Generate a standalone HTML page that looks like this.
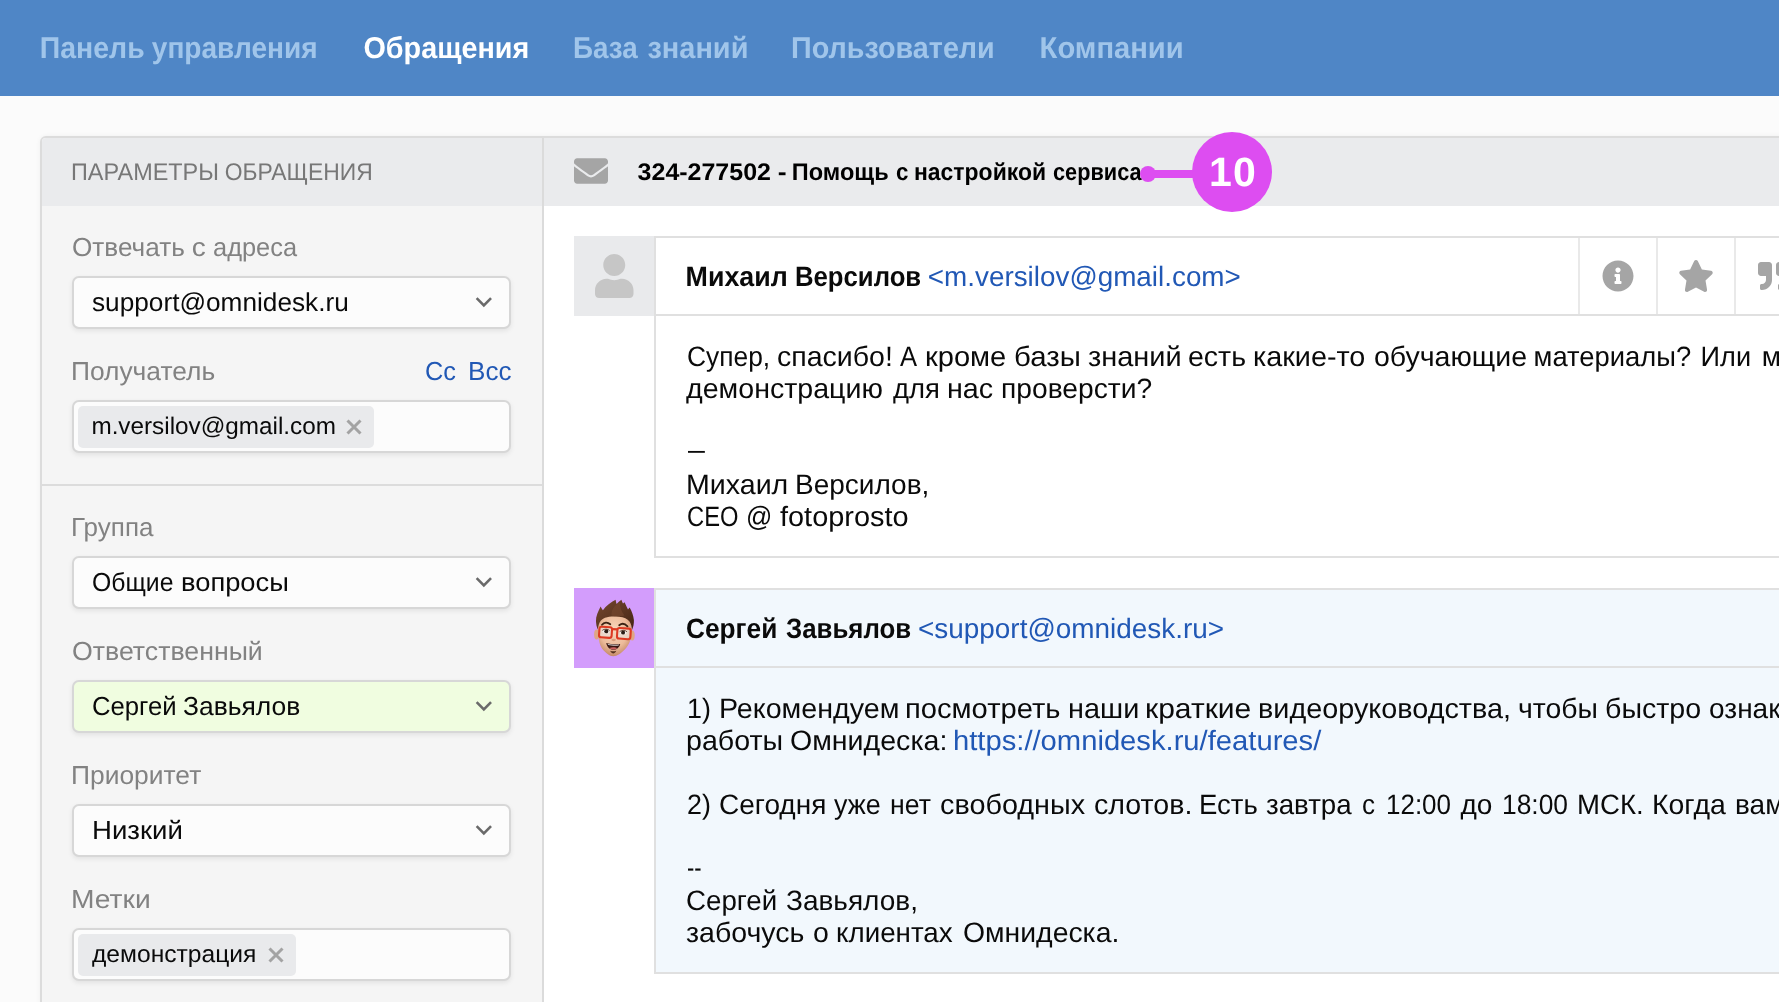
<!DOCTYPE html>
<html lang="ru">
<head>
<meta charset="utf-8">
<title>Обращение 324-277502</title>
<style>
*{box-sizing:border-box;margin:0;padding:0}
html,body{width:1779px;height:1002px;overflow:hidden}
html{background:#fbfbfb}
body{will-change:transform;text-rendering:geometricPrecision}
body{background:#fbfbfb;font-family:"Liberation Sans",sans-serif;color:#0a0a0a;position:relative;font-size:26px;line-height:32px}
.abs{position:absolute;white-space:nowrap;transform-origin:0 50%}
/* NAV */
.nav{position:absolute;left:0;top:0;width:1779px;height:96px;background:#4f86c6}
.nav a{position:absolute;transform-origin:0 50%;top:33px;font-weight:bold;font-size:30px;line-height:32px;color:#a0c5ea;white-space:nowrap;text-decoration:none}
.nav a.on{color:#fff}
/* PANEL */
.panel{position:absolute;left:40px;top:136px;width:1800px;height:900px;border:2px solid #dcdcdc;border-radius:6px 0 0 0;background:#fff;box-shadow:0 0 5px rgba(0,0,0,.05)}
.side{position:absolute;left:42px;top:138px;width:500px;height:900px;background:#f5f5f5;border-radius:4px 0 0 0}
.sidehead{position:absolute;left:42px;top:138px;width:500px;height:68px;background:#eaebed;border-radius:4px 0 0 0}
.vline{position:absolute;left:542px;top:138px;width:2px;height:900px;background:#dbdbdb}
.mainhead{position:absolute;left:544px;top:138px;width:1300px;height:68px;background:#eaebed}
.hline{position:absolute;left:42px;top:484px;width:500px;height:2px;background:#dcdcdc}
.h1{font-size:24px;color:#777;top:157px;left:72px}
.lbl{color:#828282;left:72px}
.lnk{color:#2158b5}
.sel{position:absolute;left:72px;width:439px;height:53px;border:2px solid #d7d7d7;border-radius:7px;background:#fcfcfc;box-shadow:0 2px 5px rgba(0,0,0,.08)}
.sel.g{background:#f0fde0}
.sel>span{position:absolute;left:19px;top:8px;white-space:nowrap;transform-origin:0 50%}
.sel svg{position:absolute;left:400px;top:18px}
.tag{position:absolute;left:4px;top:4px;height:42px;background:#e9eaec;border-radius:5px}
.sel .tag>span{left:14px;top:5px;font-size:24px}
.tag svg{position:absolute;top:13px}
/* MESSAGES */
.ava{position:absolute;left:574px;width:80px;height:80px}
.msg{position:absolute;left:654px;width:1200px;border:2px solid #e0e0e0;background:#fff}
.msg .hd{position:absolute;left:0;top:0;width:1200px;height:78px;border-bottom:2px solid #e0e0e0}
.msg{font-size:28px}
.msg .hd .abs{top:23px}
.ln{position:absolute;left:30px;white-space:nowrap;transform-origin:0 50%}
.w{display:inline-block;transform-origin:0 50%}
/*FIT-START*/
#a1_0{transform:translateX(1.00px) scaleX(0.9414)}
#a1_1{transform:translateX(-5.00px) scaleX(1.0183)}
#a1_10{transform:translateX(5.60px) scaleX(0.9690)}
#a1_11{transform:translateX(7.00px) scaleX(1.0000)}
#a1_2{transform:translateX(-4.00px) scaleX(0.9140)}
#a1_3{transform:translateX(-5.00px) scaleX(1.0393)}
#a1_4{transform:translateX(-2.00px) scaleX(1.0495)}
#a1_5{transform:translateX(0.00px) scaleX(1.0338)}
#a1_6{transform:translateX(2.00px) scaleX(1.0185)}
#a1_7{transform:translateX(2.00px) scaleX(1.0280)}
#a1_8{transform:translateX(6.00px) scaleX(1.0175)}
#a1_9{transform:translateX(7.60px) scaleX(0.9776)}
#a2_0{transform:translateX(0.00px) scaleX(1.0209)}
#a2_1{transform:translateX(6.00px) scaleX(0.9797)}
#a2_2{transform:translateX(5.00px) scaleX(1.0244)}
#a2_3{transform:translateX(6.00px) scaleX(1.0069)}
#a4{transform:translateX(2.00px) scaleX(0.6022)}
#a5_0{transform:translateX(0.00px) scaleX(1.0207)}
#a5_1{transform:translateX(1.00px) scaleX(1.0000)}
#a6_0{transform:translateX(1.00px) scaleX(0.8480)}
#a6_1{transform:translateX(-8.00px) scaleX(0.9246)}
#a6_2{transform:translateX(-11.00px) scaleX(1.0321)}
#b1_0{transform:translateX(1.00px) scaleX(0.9589)}
#b1_1{transform:translateX(0.00px) scaleX(1.0231)}
#b1_2{transform:translateX(2.00px) scaleX(1.0406)}
#b1_3{transform:translateX(8.00px) scaleX(1.0307)}
#b1_4{transform:translateX(8.00px) scaleX(1.0726)}
#b1_5{transform:translateX(14.00px) scaleX(1.0288)}
#b1_6{transform:translateX(20.00px) scaleX(1.0132)}
#b1_7{transform:translateX(21.00px) scaleX(1.0218)}
#b1_8{transform:translateX(23.00px) scaleX(1.0000)}
#b2_0{transform:translateX(0.00px) scaleX(1.0218)}
#b2_1{transform:translateX(1.00px) scaleX(1.0199)}
#b2l{transform:translateX(-1.00px) scaleX(1.0425)}
#b4_0{transform:translateX(1.00px) scaleX(0.9594)}
#b4_1{transform:translateX(0.00px) scaleX(1.0001)}
#b4_10{transform:translateX(5.00px) scaleX(1.0000)}
#b4_11{transform:translateX(7.00px) scaleX(0.9414)}
#b4_12{transform:translateX(4.00px) scaleX(0.9847)}
#b4_13{transform:translateX(3.00px) scaleX(1.0148)}
#b4_14{transform:translateX(6.00px) scaleX(1.0000)}
#b4_2{transform:translateX(0.00px) scaleX(0.9597)}
#b4_3{transform:translateX(0.00px) scaleX(0.9524)}
#b4_4{transform:translateX(-1.00px) scaleX(1.0286)}
#b4_5{transform:translateX(4.00px) scaleX(1.0215)}
#b4_6{transform:translateX(5.00px) scaleX(0.9831)}
#b4_7{transform:translateX(5.00px) scaleX(0.9888)}
#b4_8{transform:translateX(6.00px) scaleX(0.9295)}
#b4_9{transform:translateX(8.00px) scaleX(0.9276)}
#b6{transform:translateX(1.00px) scaleX(0.7813)}
#b7_0{transform:translateX(0.00px) scaleX(0.9892)}
#b7_1{transform:translateX(0.00px) scaleX(1.0001)}
#b8_0{transform:translateX(0.00px) scaleX(1.0174)}
#b8_1{transform:translateX(3.00px) scaleX(1.0165)}
#b8_2{transform:translateX(3.00px) scaleX(0.9915)}
#b8_3{transform:translateX(4.00px) scaleX(1.0132)}
#l1_0{transform:translateX(0.00px) scaleX(1.0056)}
#l1_1{transform:translateX(0.80px) scaleX(1.0761)}
#l1_2{transform:translateX(1.00px) scaleX(0.9770)}
#l2{transform:translateX(-1.00px) scaleX(1.0144)}
#l2b{transform:translateX(-1.00px) scaleX(1.0024)}
#l2c{transform:translateX(0.00px) scaleX(0.9739)}
#l3{transform:translateX(-1.00px) scaleX(1.0002)}
#l4{transform:translateX(0.00px) scaleX(1.0274)}
#l5{transform:translateX(-1.00px) scaleX(1.0159)}
#l6{transform:translateX(-1.00px) scaleX(1.0859)}
#m1e{transform:translateX(-0.20px) scaleX(0.9946)}
#m1n_0{transform:translateX(-0.40px) scaleX(0.9567)}
#m1n_1{transform:translateX(-5.00px) scaleX(0.9180)}
#m2e{transform:translateX(0.00px) scaleX(0.9971)}
#m2n_0{transform:translateX(0.00px) scaleX(0.9378)}
#m2n_1{transform:translateX(-5.00px) scaleX(0.9228)}
#n1_0{transform:translateX(-0.20px) scaleX(0.9484)}
#n1_1{transform:translateX(-7.20px) scaleX(0.9353)}
#n2{transform:translateX(0.40px) scaleX(0.9592)}
#n3_0{transform:translateX(0.00px) scaleX(0.9265)}
#n3_1{transform:translateX(-3.60px) scaleX(0.9650)}
#n4{transform:translateX(0.00px) scaleX(0.9579)}
#n5{transform:translateX(0.60px) scaleX(0.9723)}
#s0_0{transform:translateX(-1.00px) scaleX(0.9759)}
#s0_1{transform:translateX(-5.20px) scaleX(0.9530)}
#tt_0{transform:translateX(0.60px) scaleX(1.0407)}
#tt_1{transform:translateX(5.80px) scaleX(1.1085)}
#tt_2{transform:translateX(5.80px) scaleX(0.9819)}
#tt_3{transform:translateX(4.00px) scaleX(0.9309)}
#tt_4{transform:translateX(2.00px) scaleX(0.9559)}
#tt_5{transform:translateX(-4.00px) scaleX(0.9050)}
#v1{transform:translateX(-1.00px) scaleX(1.0080)}
#v2{transform:translateX(-0.60px) scaleX(1.0117)}
#v3_0{transform:translateX(-1.00px) scaleX(0.9524)}
#v3_1{transform:translateX(-5.00px) scaleX(1.0503)}
#v4_0{transform:translateX(-1.00px) scaleX(0.9880)}
#v4_1{transform:translateX(-3.00px) scaleX(1.0176)}
#v5{transform:translateX(-1.00px) scaleX(1.0606)}
#v6{transform:translateX(0.00px) scaleX(1.0252)}
/*FIT-END*/
.cell{position:absolute;top:0;width:78px;height:76px;border-left:2px solid #e9e9e9}
.cell svg{position:absolute}
b{font-weight:bold}
</style>
</head>
<body>
<div class="nav">
<a id="n1" style="left:40px"><span class="w" id="n1_0">Панель</span> <span class="w" id="n1_1">управления</span></a>
<a id="n2" class="on" style="left:363px">Обращения</a>
<a id="n3" style="left:573px"><span class="w" id="n3_0">База</span> <span class="w" id="n3_1">знаний</span></a>
<a id="n4" style="left:791px">Пользователи</a>
<a id="n5" style="left:1039px">Компании</a>
</div>

<div class="panel"></div>
<div class="side"></div>
<div class="sidehead"></div>
<div class="mainhead"></div>
<div class="vline"></div>
<div class="hline"></div>

<!-- SIDEBAR -->
<div class="abs h1" id="s0"><span class="w" id="s0_0">ПАРАМЕТРЫ</span> <span class="w" id="s0_1">ОБРАЩЕНИЯ</span></div>

<div class="abs lbl" id="l1" style="top:231px"><span class="w" id="l1_0">Отвечать</span> <span class="w" id="l1_1">с</span> <span class="w" id="l1_2">адреса</span></div>
<div class="sel" style="top:276px"><span id="v1">support@omnidesk.ru</span>
<svg width="20" height="14" viewBox="0 0 20 14"><path d="M2.65 2.1 L9.85 9.3 L17.05 2.1" fill="none" stroke="#6a6a6a" stroke-width="2.6"/></svg></div>

<div class="abs lbl" id="l2" style="top:355px">Получатель</div>
<div class="abs lnk" id="l2c" style="top:355px;left:425px">Cc</div>
<div class="abs lnk" id="l2b" style="top:355px;left:469px">Bcc</div>
<div class="sel" style="top:400px"><div class="tag" style="width:296px"><span class="abs" id="v2">m.versilov@gmail.com</span>
<svg style="left:268px" width="16" height="16" viewBox="0 0 16 16"><path d="M1.5 1.5 L14.5 14.5 M14.5 1.5 L1.5 14.5" fill="none" stroke="#a3a3a3" stroke-width="3"/></svg></div></div>

<div class="abs lbl" id="l3" style="top:511px">Группа</div>
<div class="sel" style="top:556px"><span id="v3"><span class="w" id="v3_0">Общие</span> <span class="w" id="v3_1">вопросы</span></span>
<svg width="20" height="14" viewBox="0 0 20 14"><path d="M2.65 2.1 L9.85 9.3 L17.05 2.1" fill="none" stroke="#6a6a6a" stroke-width="2.6"/></svg></div>

<div class="abs lbl" id="l4" style="top:635px">Ответственный</div>
<div class="sel g" style="top:680px"><span id="v4"><span class="w" id="v4_0">Сергей</span> <span class="w" id="v4_1">Завьялов</span></span>
<svg width="20" height="14" viewBox="0 0 20 14"><path d="M2.65 2.1 L9.85 9.3 L17.05 2.1" fill="none" stroke="#6a6a6a" stroke-width="2.6"/></svg></div>

<div class="abs lbl" id="l5" style="top:759px">Приоритет</div>
<div class="sel" style="top:804px"><span id="v5">Низкий</span>
<svg width="20" height="14" viewBox="0 0 20 14"><path d="M2.65 2.1 L9.85 9.3 L17.05 2.1" fill="none" stroke="#6a6a6a" stroke-width="2.6"/></svg></div>

<div class="abs lbl" id="l6" style="top:883px">Метки</div>
<div class="sel" style="top:928px"><div class="tag" style="width:218px"><span class="abs" id="v6">демонстрация</span>
<svg style="left:190px" width="16" height="16" viewBox="0 0 16 16"><path d="M1.5 1.5 L14.5 14.5 M14.5 1.5 L1.5 14.5" fill="none" stroke="#a3a3a3" stroke-width="3"/></svg></div></div>

<!-- MAIN HEADER -->
<svg class="abs" style="left:574px;top:154px" width="34" height="34" viewBox="0 0 512 512"><path fill="#a5a5a5" d="M502.3 190.8c3.900-3.100 9.700-.2 9.700 4.700V400c0 26.500-21.500 48-48 48H48c-26.500 0-48-21.500-48-48V195.600c0-5 5.700-7.800 9.700-4.700 22.400 17.400 52.100 39.500 154.100 113.600 21.100 15.400 56.700 47.800 92.200 47.600 35.700.3 72-32.800 92.300-47.600 102-74.100 131.600-96.300 154-113.700zM256 320c23.200.4 56.600-29.200 73.400-41.400 132.700-96.300 142.800-104.700 173.400-128.700 5.800-4.500 9.200-11.500 9.200-18.900v-19c0-26.500-21.500-48-48-48H48C21.500 64 0 85.500 0 112v19c0 7.400 3.400 14.300 9.200 18.900 30.600 23.900 40.700 32.400 173.400 128.700 16.800 12.200 50.200 41.800 73.400 41.400z"/></svg>
<div class="abs" id="tt" style="left:637px;top:157px;font-size:24px;font-weight:bold;color:#000"><span class="w" id="tt_0">324-277502</span> <span class="w" id="tt_1">-</span> <span class="w" id="tt_2">Помощь</span> <span class="w" id="tt_3">с</span> <span class="w" id="tt_4">настройкой</span> <span class="w" id="tt_5">сервиса</span></div>
<svg class="abs" style="left:1136px;top:128px" width="140" height="88" viewBox="0 0 140 88"><g fill="#dd4df1"><circle cx="12" cy="46" r="8"/><rect x="12" y="42" width="60" height="8"/><circle cx="96" cy="44" r="40"/></g><text x="97" y="57.800" text-anchor="middle" font-family="Liberation Sans, sans-serif" font-weight="bold" font-size="41" fill="#fff" letter-spacing="1.2">10</text></svg>

<!-- MESSAGE 1 -->
<div class="ava" style="top:236px;background:#e9eaec"><svg style="position:absolute;left:21px;top:18px" width="38.500" height="44" viewBox="0 0 448 512"><path fill="#c6c6c6" d="M224 256c70.700 0 128-57.300 128-128S294.700 0 224 0 96 57.300 96 128s57.300 128 128 128zm89.600 32h-16.700c-22.200 10.200-46.900 16-72.900 16s-50.600-5.800-72.900-16h-16.700C60.200 288 0 348.200 0 422.400V464c0 26.500 21.500 48 48 48h352c26.500 0 48-21.500 48-48v-41.600c0-74.200-60.200-134.400-134.400-134.400z"/></svg></div>
<div class="msg" style="top:236px;height:322px">
<div class="hd"><b class="abs" id="m1n" style="left:30px"><span class="w" id="m1n_0">Михаил</span> <span class="w" id="m1n_1">Версилов</span></b> <span class="abs lnk" id="m1e" style="left:272px">&lt;m.versilov@gmail.com&gt;</span>
<div class="cell" style="left:922px"><svg style="left:22px;top:22px" width="32" height="32" viewBox="0 0 512 512"><path fill="#a5a5a5" d="M256 8C119.043 8 8 119.083 8 256c0 136.997 111.043 248 248 248s248-111.003 248-248C504 119.083 392.957 8 256 8zm0 110c23.196 0 42 18.804 42 42s-18.804 42-42 42-42-18.804-42-42 18.804-42 42-42zm56 254c0 6.627-5.373 12-12 12h-88c-6.627 0-12-5.373-12-12v-24c0-6.627 5.373-12 12-12h12v-64h-12c-6.627 0-12-5.373-12-12v-24c0-6.627 5.373-12 12-12h64c6.627 0 12 5.373 12 12v100h12c6.627 0 12 5.373 12 12v24z"/></svg></div>
<div class="cell" style="left:1000px"><svg style="left:20px;top:22px" width="36" height="32" viewBox="0 0 576 512"><path fill="#a5a5a5" d="M259.300 17.800L194 150.200 47.900 171.500c-26.200 3.800-36.700 36.100-17.700 54.600l105.700 103-25 145.500c-4.500 26.300 23.200 46 46.400 33.700L288 439.600l130.700 68.700c23.200 12.200 50.900-7.400 46.400-33.700l-25-145.500 105.700-103c19-18.500 8.500-50.800-17.700-54.600L382 150.200 316.700 17.800c-11.700-23.600-45.600-23.900-57.400 0z"/></svg></div>
<div class="cell" style="left:1078px"><svg style="left:22px;top:22px" width="32" height="32" viewBox="0 0 512 512"><path fill="#a5a5a5" d="M464 32H336c-26.500 0-48 21.500-48 48v128c0 26.500 21.500 48 48 48h80v64c0 35.300-28.700 64-64 64h-8c-13.300 0-24 10.700-24 24v48c0 13.300 10.700 24 24 24h8c88.400 0 160-71.600 160-160V80c0-26.500-21.500-48-48-48zm-288 0H48C21.500 32 0 53.500 0 80v128c0 26.500 21.500 48 48 48h80v64c0 35.300-28.700 64-64 64h-8c-13.300 0-24 10.700-24 24v48c0 13.300 10.700 24 24 24h8c88.400 0 160-71.600 160-160V80c0-26.500-21.500-48-48-48z"/></svg></div>
</div>
<div class="ln" id="a1" style="top:103px"><span class="w" id="a1_0">Супер,</span> <span class="w" id="a1_1">спасибо!</span> <span class="w" id="a1_2">А</span> <span class="w" id="a1_3">кроме</span> <span class="w" id="a1_4">базы</span> <span class="w" id="a1_5">знаний</span> <span class="w" id="a1_6">есть</span> <span class="w" id="a1_7">какие-то</span> <span class="w" id="a1_8">обучающие</span> <span class="w" id="a1_9">материалы?</span> <span class="w" id="a1_10">Или</span> <span class="w" id="a1_11">можете</span> <span class="w" id="a1_12">онлайн-</span></div>
<div class="ln" id="a2" style="top:135px"><span class="w" id="a2_0">демонстрацию</span> <span class="w" id="a2_1">для</span> <span class="w" id="a2_2">нас</span> <span class="w" id="a2_3">проверсти?</span></div>
<div class="ln" id="a4" style="top:196px">—</div>
<div class="ln" id="a5" style="top:231px"><span class="w" id="a5_0">Михаил</span> <span class="w" id="a5_1">Версилов,</span></div>
<div class="ln" id="a6" style="top:263px"><span class="w" id="a6_0">CEO</span> <span class="w" id="a6_1">@</span> <span class="w" id="a6_2">fotoprosto</span></div>
</div>

<!-- MESSAGE 2 -->
<div class="ava" id="ava2" style="top:588px;background:#d39dfc"><svg width="80" height="80" viewBox="0 0 80 80"><defs><radialGradient id="fg" cx="48%" cy="38%" r="62%"><stop offset="0" stop-color="#f8d6bd"/><stop offset=".65" stop-color="#ecbb9a"/><stop offset="1" stop-color="#c58a68"/></radialGradient><linearGradient id="hg" x1="0" y1="0" x2="1" y2="1"><stop offset="0" stop-color="#754730"/><stop offset=".5" stop-color="#5e3722"/><stop offset="1" stop-color="#432414"/></linearGradient></defs><ellipse cx="22.600" cy="46.500" rx="2.500" ry="5" fill="#dfa684"/><ellipse cx="58.200" cy="47.500" rx="2.500" ry="5" fill="#dfa684"/><path d="M23.800 40C23.300 32 29 26.500 40.500 26.500 52.500 26.500 58.200 32.500 57.800 42 57.600 51 55.200 57 50.800 61.500 47.300 65 43.200 68.200 39.300 68.200 35.400 68.200 31.800 65 28.400 61 25.200 56.600 24.100 50 23.800 40Z" fill="url(#fg)"/><path d="M23.700 41.500C21.600 36.500 21.300 30.500 23.300 25.800 24.300 23.200 25.500 20.700 26.600 18.400 27.300 19.800 28 21 28.900 22.300 32 17.600 37 14.400 41.600 11.800 41.800 13.400 42.200 14.800 42.600 16 44 14.400 45.600 13 47.400 11.700 47.800 13 48.400 14.400 49 15.600L50.600 14.200C51.600 16.600 52.700 18.800 54 21.400L55.600 19.600C57.700 23 59.500 28 59.900 32 60.100 36 59.200 39.200 58 42 57.600 38.300 57 35.600 55.500 33.600 53.500 30.800 50 29.300 45 28.700 40 28.100 35 28.300 31 29.700 27.600 31 25.600 33.600 24.800 36.600 24.400 38.200 24.100 39.800 23.700 41.500Z" fill="url(#hg)"/><path d="M37.500 27.500C37 22 40.500 17 46 14.500 45.500 19 47.500 23.500 50.500 27.500 46.500 28.800 41.500 28.800 37.500 27.500Z" fill="#7a4a31" opacity=".55"/><path d="M28 36.800C30 34.300 33.500 34 36.300 36.200" fill="none" stroke="#3b2214" stroke-width="1.800" stroke-linecap="round"/><path d="M45.200 37.200C47.700 35.200 51 35.600 53.500 38.400" fill="none" stroke="#3b2214" stroke-width="1.800" stroke-linecap="round"/><g transform="rotate(4 40 45)"><rect x="25.200" y="39.600" width="12.600" height="10.600" rx="2.200" fill="#e9e6e2" fill-opacity=".6"/><rect x="43.200" y="39.600" width="13.400" height="10.600" rx="2.200" fill="#e9e6e2" fill-opacity=".6"/><ellipse cx="31.800" cy="43.900" rx="3.400" ry="2" fill="#f4f1ee"/><ellipse cx="49.200" cy="43.900" rx="3.400" ry="2" fill="#f4f1ee"/><circle cx="32.200" cy="43.900" r="2" fill="#2b1c14"/><circle cx="49" cy="43.900" r="2" fill="#2b1c14"/><path d="M28.200 43.200C30 41.300 33.800 41.200 35.500 43" fill="none" stroke="#4a2c1c" stroke-width=".8"/><path d="M45.600 43.200C47.400 41.300 51.200 41.200 52.900 43" fill="none" stroke="#4a2c1c" stroke-width=".8"/><rect x="25.200" y="39.600" width="12.600" height="10.600" rx="2.200" fill="none" stroke="#dd3a22" stroke-width="2.100"/><rect x="43.200" y="39.600" width="13.400" height="10.600" rx="2.200" fill="none" stroke="#dd3a22" stroke-width="2.100"/><path d="M37.800 41.200H43.200" stroke="#dd3a22" stroke-width="2.200"/></g><path d="M37.300 51.800C37.600 53.600 41.600 53.600 42 51.800 41 50.400 38.400 50.300 37.300 51.800Z" fill="#d99c7b"/><path d="M32.200 55C36 56.200 42.500 56.600 46.200 56 45.500 59.500 42.500 61.800 39.400 61.800 36 61.800 33 59 32.200 55Z" fill="#3a1712"/><path d="M33.600 55.700C37 56.600 42 56.900 45 56.500L44.600 57.400C41.500 57.900 37.200 57.600 34 56.700Z" fill="#cfcfcf"/><path d="M35.500 60C37.500 58.800 41.500 58.900 43.200 60.200 41.200 62 37.500 62 35.500 60Z" fill="#c9605f"/><path d="M36.200 62.800C38 63.500 40.500 63.500 42.300 62.800 41.500 64.600 40.300 65.600 39.300 65.600 38.200 65.600 37 64.600 36.200 62.800Z" fill="#55301d"/></svg></div>
<div class="msg" style="top:588px;height:386px;background:#f2f8fd">
<div class="hd"><b class="abs" id="m2n" style="left:30px"><span class="w" id="m2n_0">Сергей</span> <span class="w" id="m2n_1">Завьялов</span></b> <span class="abs lnk" id="m2e" style="left:262px">&lt;support@omnidesk.ru&gt;</span></div>
<div class="ln" id="b1" style="top:103px"><span class="w" id="b1_0">1)</span> <span class="w" id="b1_1">Рекомендуем</span> <span class="w" id="b1_2">посмотреть</span> <span class="w" id="b1_3">наши</span> <span class="w" id="b1_4">краткие</span> <span class="w" id="b1_5">видеоруководства,</span> <span class="w" id="b1_6">чтобы</span> <span class="w" id="b1_7">быстро</span> <span class="w" id="b1_8">ознакомиться</span> <span class="w" id="b1_9">с</span> <span class="w" id="b1_10">принципами</span></div>
<div class="ln" id="b2" style="top:135px"><span class="w" id="b2_0">работы</span> <span class="w" id="b2_1">Омнидеска:</span></div>
<div class="ln lnk" id="b2l" style="top:135px;left:298px">https://omnidesk.ru/features/</div>
<div class="ln" id="b4" style="top:199px"><span class="w" id="b4_0">2)</span> <span class="w" id="b4_1">Сегодня</span> <span class="w" id="b4_2">уже</span> <span class="w" id="b4_3">нет</span> <span class="w" id="b4_4">свободных</span> <span class="w" id="b4_5">слотов.</span> <span class="w" id="b4_6">Есть</span> <span class="w" id="b4_7">завтра</span> <span class="w" id="b4_8">с</span> <span class="w" id="b4_9">12:00</span> <span class="w" id="b4_10">до</span> <span class="w" id="b4_11">18:00</span> <span class="w" id="b4_12">МСК.</span> <span class="w" id="b4_13">Когда</span> <span class="w" id="b4_14">вам</span> <span class="w" id="b4_15">удобно?</span></div>
<div class="ln" id="b6" style="top:262px">--</div>
<div class="ln" id="b7" style="top:295px"><span class="w" id="b7_0">Сергей</span> <span class="w" id="b7_1">Завьялов,</span></div>
<div class="ln" id="b8" style="top:327px"><span class="w" id="b8_0">забочусь</span> <span class="w" id="b8_1">о</span> <span class="w" id="b8_2">клиентах</span> <span class="w" id="b8_3">Омнидеска.</span></div>
</div>
</body>
</html>
